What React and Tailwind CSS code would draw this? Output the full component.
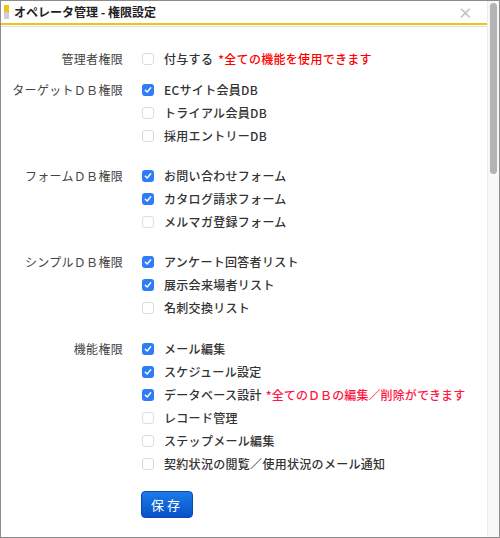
import React from "react";

const groups = [
  {
    label: "ターゲットＤＢ権限",
    items: [
      { text: "ECサイト会員DB", checked: true },
      { text: "トライアル会員DB" },
      { text: "採用エントリーDB" },
    ],
  },
  {
    label: "フォームＤＢ権限",
    items: [
      { text: "お問い合わせフォーム", checked: true },
      { text: "カタログ請求フォーム", checked: true },
      { text: "メルマガ登録フォーム" },
    ],
  },
  {
    label: "シンプルＤＢ権限",
    items: [
      { text: "アンケート回答者リスト", checked: true },
      { text: "展示会来場者リスト", checked: true },
      { text: "名刺交換リスト" },
    ],
  },
  {
    label: "機能権限",
    items: [
      { text: "メール編集", checked: true },
      { text: "スケジュール設定", checked: true },
      { text: "データベース設計", checked: true, note: "*全てのＤＢの編集／削除ができます" },
      { text: "レコード管理" },
      { text: "ステップメール編集" },
      { text: "契約状況の閲覧／使用状況のメール通知" },
    ],
  },
];

function Check({ checked }) {
  if (checked) {
    return (
      <span className="flex h-[12px] w-[12px] shrink-0 items-center justify-center rounded-[3px] bg-[#2f7df6]">
        <svg width="8" height="8" viewBox="0 0 8 8">
          <path d="M1.3 4.2 L3.2 6 L6.7 1.8" fill="none" stroke="#fff" strokeWidth="1.4" strokeLinecap="round" strokeLinejoin="round" />
        </svg>
      </span>
    );
  }
  return <span className="h-[12px] w-[12px] shrink-0 rounded-[3px] border border-[#dcdcdc] bg-white" />;
}

function Row({ item }) {
  return (
    <div className="flex h-[23px] items-center">
      <Check checked={item.checked} />
      <span className="ml-[10px] font-medium text-[#333]">{item.text}</span>
      {item.note && (
        <span className="ml-[4px] font-medium tracking-[0.1px] text-[#ff1744]">{item.note}</span>
      )}
    </div>
  );
}

function Group({ label, children, className }) {
  return (
    <div className={"flex " + (className || "")}>
      <div className="flex h-[23px] w-[122px] shrink-0 items-center justify-end text-[#444]">{label}</div>
      <div className="ml-[19px] flex flex-col">{children}</div>
    </div>
  );
}

export default function App() {
  return (
    <div
      className="flex h-[538px] w-[500px] overflow-hidden border border-[#8c8c8c] bg-white text-[12px] tracking-[0.3px]"
      style={{ fontFamily: '"Noto Sans CJK JP", "Noto Sans", sans-serif' }}
    >
      <div className="flex flex-1 flex-col">
        <div className="flex h-[24px] items-center border-b-2 border-[#f5c116] pl-[3px] pr-[14px]">
          <span className="flex h-[14px] w-[5px] flex-col">
            <span className="h-[7px] bg-[#f5c116]" />
            <span className="h-[7px] bg-[#cfcfcf]" />
          </span>
          <span className="ml-[5px] font-bold tracking-normal text-[#222]">オペレータ管理 - 権限設定</span>
          <span className="ml-auto text-[15px] font-bold leading-none text-[#c4c4c4]">×</span>
        </div>
        <div className="mt-[1px] h-[1px] bg-[#dedede]" />
        <div className="pt-[20px]">
          <Group label="管理者権限">
            <div className="flex h-[23px] items-center">
              <Check />
              <span className="ml-[10px] font-medium text-[#333]">付与する</span>
              <span className="ml-[5px] font-medium text-[#ff0000]">*全ての機能を使用できます</span>
            </div>
          </Group>
          {groups.map((g, i) => (
            <Group
              key={i}
              label={g.label}
              className={i === 0 ? "mt-[8px]" : i === 3 ? "mt-[18px]" : "mt-[17px]"}
            >
              {g.items.map((it, j) => (
                <Row key={j} item={it} />
              ))}
            </Group>
          ))}
          <div className="ml-[140px] mt-[16px]">
            <button className="h-[27px] w-[52px] rounded-[4px] border border-[#0b4ab0] bg-gradient-to-b from-[#1d7ae8] to-[#0a50c8] text-[13px] tracking-[3px] text-white">
              保存
            </button>
          </div>
        </div>
      </div>
      <div className="flex w-[12px] shrink-0 justify-center border-l border-[#ececec] bg-[#f8f8f8] pt-[2px]">
        <div className="h-[171px] w-[7px] rounded-full bg-[#b3b3b3]" />
      </div>
    </div>
  );
}
